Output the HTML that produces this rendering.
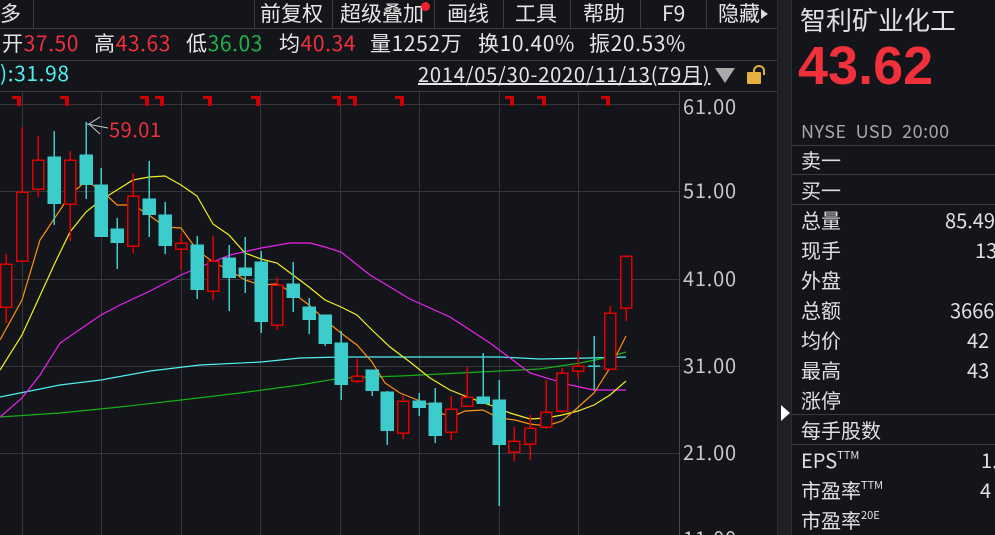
<!DOCTYPE html>
<html><head><meta charset="utf-8"><style>
*{margin:0;padding:0;box-sizing:border-box}
body{width:995px;height:535px;overflow:hidden;background:#13151a;font-family:"Noto Sans CJK SC","Liberation Sans",sans-serif;color:#dcdcdc;position:relative}
.a{position:absolute;white-space:nowrap;line-height:1.2}
.t{font-size:21px;top:1px;color:#e6e6e6}
.r{color:#f0303a}.g{color:#1fb34a}.c{color:#4ef0f0}
.q{font-size:21px;top:31px;color:#e6e6e6;letter-spacing:0.6px}
.l{font-size:20px;left:801px;color:#e0e0e0}
.v{font-size:20px;color:#e0e0e0}
sup{font-size:11px;vertical-align:0;position:relative;top:-9px}
.hl{position:absolute;height:1px;background:#3a3c42}
.vl{position:absolute;width:1px;background:#3a3c42}
</style></head><body>
<div class="hl" style="left:0;top:28px;width:777px"></div>
<div class="hl" style="left:0;top:60px;width:777px"></div>
<div class="hl" style="left:0;top:91px;width:777px"></div>
<div class="vl" style="left:33px;top:0;height:28px"></div>
<div class="vl" style="left:254px;top:0;height:28px"></div>
<div class="vl" style="left:332px;top:0;height:28px"></div>
<div class="vl" style="left:434px;top:0;height:28px"></div>
<div class="vl" style="left:503px;top:0;height:28px"></div>
<div class="vl" style="left:570px;top:0;height:28px"></div>
<div class="vl" style="left:640px;top:0;height:28px"></div>
<div class="vl" style="left:706px;top:0;height:28px"></div>
<div class="a t" style="left:0">多</div>
<div class="a t" style="left:260px">前复权</div>
<div class="a t" style="left:340px">超级叠加</div>
<div class="a" style="left:421px;top:2px;width:9px;height:9px;border-radius:50%;background:#f02030"></div>
<div class="a t" style="left:447px">画线</div>
<div class="a t" style="left:515px">工具</div>
<div class="a t" style="left:583px">帮助</div>
<div class="a t" style="left:662px">F9</div>
<div class="a t" style="left:718px">隐藏</div>
<div class="a" style="left:761px;top:9px;border-left:7px solid #ddd;border-top:5px solid transparent;border-bottom:5px solid transparent"></div>
<div class="a q" style="left:2px">开<span class="r">37.50</span></div>
<div class="a q" style="left:94px">高<span class="r">43.63</span></div>
<div class="a q" style="left:186px">低<span class="g">36.03</span></div>
<div class="a q" style="left:279px">均<span class="r">40.34</span></div>
<div class="a q" style="left:370px">量1252万</div>
<div class="a q" style="left:478px">换10.40%</div>
<div class="a q" style="left:589px">振20.53%</div>
<div class="a c" style="left:0;top:61px;font-size:21px;letter-spacing:0.6px">):31.98</div>
<div class="a" style="left:418px;top:62px;font-size:20px;letter-spacing:0.8px;color:#e6e6e6;text-decoration:underline">2014/05/30-2020/11/13(79月)</div>
<div class="a" style="left:715px;top:68px;border-top:15px solid #aaa;border-left:10px solid transparent;border-right:10px solid transparent"></div>
<div class="a" style="left:747px;top:72px;width:14px;height:12px;background:#e8b040;border-radius:1px"></div>
<div class="a" style="left:753px;top:65px;width:12px;height:10px;border:2px solid #e8b040;border-bottom:none;border-radius:6px 6px 0 0"></div>
<svg class="a" style="left:0;top:0" width="777" height="535">
<g stroke="#35373d" stroke-width="1" shape-rendering="crispEdges">
<line x1="0" y1="104.5" x2="679" y2="104.5"/>
<line x1="0" y1="191.5" x2="679" y2="191.5"/>
<line x1="0" y1="279.5" x2="679" y2="279.5"/>
<line x1="0" y1="366.5" x2="679" y2="366.5"/>
<line x1="0" y1="453.5" x2="679" y2="453.5"/>
<line x1="22.5" y1="92" x2="22.5" y2="535"/><line x1="101.5" y1="92" x2="101.5" y2="535"/>
<line x1="181.5" y1="92" x2="181.5" y2="535"/><line x1="260.5" y1="92" x2="260.5" y2="535"/>
<line x1="340.5" y1="92" x2="340.5" y2="535"/><line x1="419.5" y1="92" x2="419.5" y2="535"/>
<line x1="499.5" y1="92" x2="499.5" y2="535"/><line x1="578.5" y1="92" x2="578.5" y2="535"/>
<line x1="679.5" y1="92" x2="679.5" y2="535" stroke="#45474d"/>
</g>
<g fill="#cc0000">
<path id="m" d="M12 96h9v10h-4v-7h-5z"/>
<use href="#m" x="48"/><use href="#m" x="128"/><use href="#m" x="143"/><use href="#m" x="191"/>
<use href="#m" x="239"/><use href="#m" x="320"/><use href="#m" x="336"/><use href="#m" x="383"/>
<use href="#m" x="493"/><use href="#m" x="525"/><use href="#m" x="589"/>
</g>
<g fill="none" stroke-width="1.2">
<polyline stroke="#4ef0f0" points="0,397 60,385 101,380 150,371 200,365 261,362 300,358 341,357 500,357 540,359 590,358 626,357"/>
<polyline stroke="#16b016" points="0,417 60,413 120,407 181,400 240,393 300,385 341,378 400,376 480,372 540,369 580,363 610,357 626,352"/>
<polyline stroke="#f020f0" points="0,417 22,398 40,375 60,343 101,315 120,305 150,291 181,275 200,267 230,255 261,248 290,243 310,243 325,247 341,252 370,275 410,299 450,317 490,343 530,373 570,385 594,390 626,390"/>
<polyline stroke="#f0f020" points="0,370 22,335 38,300 54,265 70,232 86,212 101,200 117,190 133,180 149,177 165,176 181,185 197,196 213,224 229,235 245,253 261,259 277,263 293,275 309,287 325,300 341,307 357,315 372,330 390,347 410,362 430,378 450,390 470,398 490,405 510,413 530,419 546,418 562,415 578,411 594,405 610,395 626,381"/>
<polyline stroke="#ff9010" points="0,340 22,300 40,240 70,195 86,181 101,190 117,205 133,205 149,215 165,227 181,228 197,250 213,262 229,270 245,280 261,285 277,284 293,293 309,305 325,320 341,333 357,345 372,362 385,383 400,393 415,399 430,405 440,413 452,417 465,411 483,410 499,418 515,420 530,424 546,426 562,421 575,410 594,393 610,368 626,336"/>
</g>
<g stroke-width="1.5" shape-rendering="crispEdges">
<g stroke="#e00000" fill="#13151a">
<line x1="6" y1="254" x2="6" y2="323"/><rect x="0.5" y="264" width="11" height="43"/>
<line x1="22" y1="127" x2="22" y2="261"/><rect x="16.5" y="192" width="11" height="69"/>
<line x1="38" y1="136" x2="38" y2="197"/><rect x="32.5" y="160" width="11" height="29"/>
<line x1="70" y1="151" x2="70" y2="241"/><rect x="64.5" y="160" width="11" height="44"/>
<line x1="133" y1="173" x2="133" y2="253"/><rect x="127.5" y="196" width="11" height="50"/>
<line x1="181" y1="233" x2="181" y2="270"/><rect x="175.5" y="243" width="11" height="6"/>
<line x1="213" y1="236" x2="213" y2="300"/><rect x="207.5" y="261" width="11" height="30"/>
<line x1="277" y1="277" x2="277" y2="330"/><rect x="271.5" y="285" width="11" height="40"/>
<line x1="357" y1="359" x2="357" y2="383"/><rect x="351.5" y="376" width="11" height="5"/>
<line x1="403" y1="396" x2="403" y2="439"/><rect x="397.5" y="401" width="11" height="32"/>
<line x1="451" y1="396" x2="451" y2="440"/><rect x="445.5" y="409" width="11" height="23"/>
<line x1="467" y1="367" x2="467" y2="406"/><rect x="461.5" y="397" width="11" height="9"/>
<line x1="514" y1="427" x2="514" y2="461"/><rect x="508.5" y="441" width="11" height="11"/>
<line x1="530" y1="415" x2="530" y2="460"/><rect x="524.5" y="428" width="11" height="16"/>
<line x1="546" y1="380" x2="546" y2="429"/><rect x="540.5" y="412" width="11" height="15"/>
<line x1="562" y1="368" x2="562" y2="413"/><rect x="556.5" y="373" width="11" height="38"/>
<line x1="578" y1="351" x2="578" y2="379"/><rect x="572.5" y="366" width="11" height="5"/>
<line x1="610" y1="306" x2="610" y2="369"/><rect x="604.5" y="313" width="11" height="56"/>
<line x1="626" y1="256" x2="626" y2="321"/><rect x="620.5" y="256" width="11" height="52"/>
</g>
<g stroke="#3ccccc" fill="#3ccccc">
<line x1="54" y1="131" x2="54" y2="225"/><rect x="48" y="157" width="12" height="46"/>
<line x1="86" y1="122" x2="86" y2="199"/><rect x="80" y="155" width="12" height="29"/>
<line x1="101" y1="168" x2="101" y2="236"/><rect x="95" y="185" width="12" height="51"/>
<line x1="117" y1="218" x2="117" y2="269"/><rect x="111" y="229" width="12" height="13"/>
<line x1="149" y1="161" x2="149" y2="237"/><rect x="143" y="199" width="12" height="15"/>
<line x1="165" y1="202" x2="165" y2="254"/><rect x="159" y="215" width="12" height="30"/>
<line x1="197" y1="236" x2="197" y2="299"/><rect x="191" y="245" width="12" height="44"/>
<line x1="229" y1="245" x2="229" y2="311"/><rect x="223" y="258" width="12" height="19"/>
<line x1="245" y1="237" x2="245" y2="293"/><rect x="239" y="268" width="12" height="7"/>
<line x1="261" y1="251" x2="261" y2="333"/><rect x="255" y="262" width="12" height="59"/>
<line x1="293" y1="262" x2="293" y2="312"/><rect x="287" y="284" width="12" height="13"/>
<line x1="309" y1="298" x2="309" y2="334"/><rect x="303" y="307" width="12" height="12"/>
<line x1="325" y1="315" x2="325" y2="346"/><rect x="319" y="315" width="12" height="28"/>
<line x1="341" y1="331" x2="341" y2="400"/><rect x="335" y="343" width="12" height="41"/>
<line x1="372" y1="370" x2="372" y2="396"/><rect x="366" y="370" width="12" height="20"/>
<line x1="387" y1="391" x2="387" y2="445"/><rect x="381" y="392" width="12" height="38"/>
<line x1="419" y1="393" x2="419" y2="416"/><rect x="413" y="401" width="12" height="6"/>
<line x1="435" y1="388" x2="435" y2="443"/><rect x="429" y="403" width="12" height="32"/>
<line x1="483" y1="353" x2="483" y2="403"/><rect x="477" y="397" width="12" height="6"/>
<line x1="499" y1="380" x2="499" y2="506"/><rect x="493" y="400" width="12" height="44"/>
<line x1="594" y1="336" x2="594" y2="390"/><line x1="588" y1="366" x2="600" y2="366"/>
</g>
</g>
<polyline points="100,134 89,124 100,117" fill="none" stroke="#ccc" stroke-width="1"/>
<line x1="87" y1="124" x2="108" y2="128" stroke="#ccc" stroke-width="1"/>
<text x="109" y="137" fill="#f0303a" font-size="20" letter-spacing="0.5" font-family="Noto Sans CJK SC, Liberation Sans, sans-serif">59.01</text>
<g fill="#c8c8c8" font-size="20" letter-spacing="0.8" font-family="Noto Sans CJK SC, Liberation Sans, sans-serif">
<text x="683" y="114">61.00</text><text x="683" y="198">51.00</text><text x="683" y="286">41.00</text>
<text x="683" y="373">31.00</text><text x="683" y="460">21.00</text><text x="683" y="546">11.00</text>
</g>
</svg>
<div class="a" style="left:777px;top:0;width:15px;height:535px;background:#1f2026;border-left:1px solid #2a2b31;border-right:1px solid #2e3036"></div>
<div class="a" style="left:781px;top:405px;border-left:9px solid #fff;border-top:8px solid transparent;border-bottom:8px solid transparent"></div>
<div class="a" style="left:800px;top:4px;font-size:26px;color:#e0e0e0">智利矿业化工</div>
<div class="a r" style="left:798px;top:34px;font-size:54px;font-weight:bold;font-family:'Liberation Sans',sans-serif">43.62</div>
<div class="a" style="left:801px;top:121px;font-size:18px;color:#a8a8a8;letter-spacing:0.5px">NYSE&nbsp; USD&nbsp; 20:00</div>
<div class="hl" style="left:792px;top:145px;width:203px"></div>
<div class="hl" style="left:792px;top:174px;width:203px"></div>
<div class="hl" style="left:792px;top:204px;width:203px"></div>
<div class="hl" style="left:792px;top:414px;width:203px"></div>
<div class="hl" style="left:792px;top:444px;width:203px"></div>
<div class="a l" style="top:148px">卖一</div>
<div class="a l" style="top:178px">买一</div>
<div class="a l" style="top:208px">总量</div>
<div class="a l" style="top:238px">现手</div>
<div class="a l" style="top:268px">外盘</div>
<div class="a l" style="top:298px">总额</div>
<div class="a l" style="top:328px">均价</div>
<div class="a l" style="top:358px">最高</div>
<div class="a l" style="top:388px">涨停</div>
<div class="a l" style="top:418px">每手股数</div>
<div class="a l" style="top:448px">EPS<sup>TTM</sup></div>
<div class="a l" style="top:478px">市盈率<sup>TTM</sup></div>
<div class="a l" style="top:508px">市盈率<sup>20E</sup></div>
<div class="a v" style="left:945px;top:208px">85.49</div>
<div class="a v" style="left:975px;top:238px">13</div>
<div class="a v" style="left:950px;top:298px">3666</div>
<div class="a v r" style="left:967px;top:328px">42</div>
<div class="a v r" style="left:967px;top:358px">43</div>
<div class="a v" style="left:981px;top:448px">1.</div>
<div class="a v" style="left:980px;top:478px">4</div>
</body></html>
